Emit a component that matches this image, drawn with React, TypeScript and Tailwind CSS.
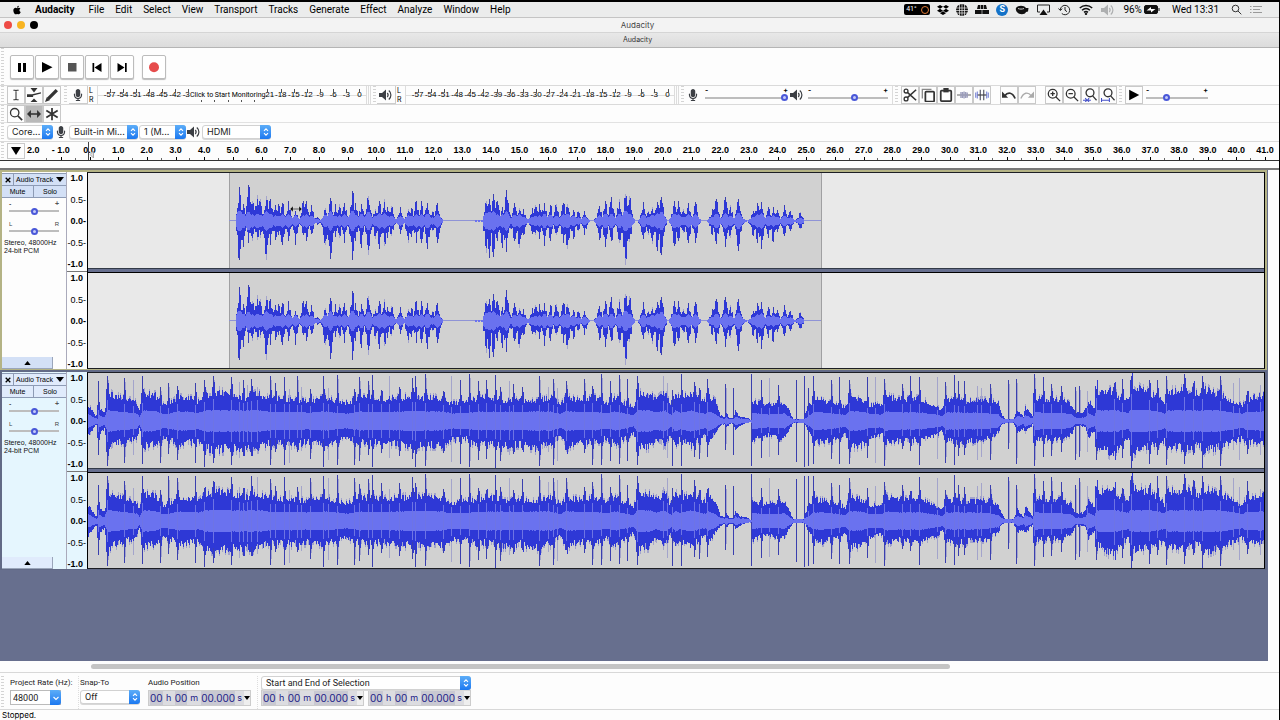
import React from "react";
import { FaApple, FaDropbox } from "react-icons/fa";
import { FaMicrophone } from "react-icons/fa6";

const SANS = "font-['Liberation_Sans',Arial,sans-serif]";

/* ---------- waveform data ---------- */

const WAVE_START = 88;
const WAVE_WIDTH = 1176;
const MID = 48;

// x, upper peak, lower peak
type Peak = [number, number, number];

const SPEECH: Peak[] = [
  [239, 34, 39], [243, 17, 26], [248, 36, 22], [252, 20, 20], [257, 26, 19], [260, 22, 17],
  [266, 25, 39], [270, 22, 24], [275, 16, 19], [278, 17, 14], [282, 18, 24], [288, 20, 20],
  [295, 10, 24], [303, 20, 14], [306, 20, 20], [311, 16, 13], [317, 4, 4], [325, 13, 24],
  [330, 23, 38], [335, 17, 16], [339, 17, 17], [344, 18, 22], [352, 30, 39], [355, 18, 20],
  [361, 17, 27], [368, 25, 34], [375, 12, 18], [379, 20, 28], [384, 22, 25], [387, 14, 17],
  [391, 15, 15], [400, 14, 13], [408, 12, 22], [411, 13, 16], [416, 20, 22], [421, 20, 22],
  [427, 18, 28], [432, 10, 10], [437, 18, 22], [486, 20, 32], [489, 22, 37], [493, 27, 36],
  [497, 20, 20], [502, 14, 27], [506, 31, 31], [510, 7, 8], [514, 18, 20], [519, 13, 27],
  [523, 12, 14], [532, 13, 13], [535, 16, 14], [539, 17, 18], [544, 18, 25], [550, 16, 20],
  [556, 17, 14], [563, 18, 22], [567, 17, 28], [573, 11, 18], [578, 10, 10], [584, 10, 14],
  [599, 15, 19], [605, 20, 26], [611, 24, 20], [619, 22, 22], [625, 27, 44], [629, 25, 21],
  [643, 19, 18], [648, 10, 14], [652, 14, 23], [657, 19, 30], [661, 24, 34], [674, 20, 25],
  [678, 20, 20], [683, 12, 12], [688, 18, 22], [695, 19, 22], [712, 12, 14], [716, 22, 23],
  [725, 24, 26], [730, 16, 17], [738, 22, 30], [741, 6, 8], [753, 10, 15], [757, 18, 22],
  [761, 19, 28], [768, 14, 17], [773, 14, 21], [777, 11, 11], [784, 16, 15], [790, 10, 10],
  [800, 9, 8],
];

const MUSIC: Peak[] = [
  [88, 16, 16], [95, 6, 5], [97, 5, 4], [98, 14, 15], [104, 9, 8], [107, 28, 28], [120, 24, 22],
  [136, 19, 18], [139, 12, 8], [143, 28, 26], [155, 26, 24], [162, 17, 18], [168, 17, 18],
  [178, 24, 24], [192, 23, 22], [198, 20, 20], [205, 26, 28], [215, 30, 30], [230, 28, 28],
  [245, 24, 28], [257, 28, 28], [272, 22, 22], [290, 22, 24], [310, 20, 22], [325, 24, 24],
  [345, 18, 18], [360, 24, 22], [380, 22, 22], [400, 24, 24], [415, 25, 26], [425, 24, 24],
  [440, 23, 26], [450, 18, 20], [465, 20, 18], [475, 22, 24], [490, 24, 22], [505, 20, 26],
  [520, 22, 24], [535, 20, 28], [550, 24, 24], [560, 17, 16], [566, 24, 26], [580, 22, 22],
  [595, 24, 22], [606, 18, 18], [615, 24, 24], [625, 18, 18], [633, 14, 12], [637, 28, 28],
  [650, 27, 26], [655, 22, 20], [665, 28, 24], [671, 15, 12], [675, 28, 25], [680, 22, 18],
  [690, 28, 26], [695, 25, 22], [705, 20, 14], [708, 27, 22], [715, 20, 12], [720, 6, 5],
  [724, 4, 3], [726, 8, 7], [729, 3, 3], [733, 3, 3], [735, 10, 9], [740, 4, 5], [743, 5, 3],
  [749, 2, 1], [751, 1, 1],
  [752, 20, 20], [765, 17, 14], [784, 19, 18], [788, 12, 10], [793, 2, 2], [803, 2, 2],
  [805, 8, 4], [809, 15, 10], [813, 22, 20], [822, 21, 22], [835, 17, 18], [845, 14, 14],
  [849, 24, 25], [860, 22, 26], [870, 16, 17], [882, 18, 14], [885, 25, 22], [900, 22, 20],
  [920, 23, 20], [937, 14, 15], [942, 12, 10], [946, 22, 20], [960, 20, 22], [985, 21, 19],
  [998, 18, 12], [1001, 8, 4], [1005, 2, 2], [1013, 2, 2], [1017, 12, 12], [1023, 4, 8],
  [1025, 14, 12], [1032, 5, 4], [1034, 24, 20], [1045, 22, 18], [1060, 22, 18], [1071, 17, 14],
  [1075, 8, 5], [1082, 8, 5], [1085, 12, 6], [1088, 20, 18], [1094, 14, 10], [1096, 30, 24],
  [1112, 31, 34], [1120, 24, 24], [1128, 22, 18], [1131, 36, 32], [1150, 28, 26], [1160, 23, 22],
  [1164, 17, 20], [1168, 30, 26], [1185, 32, 28], [1200, 27, 24], [1205, 32, 32], [1225, 25, 24],
  [1237, 18, 20], [1242, 16, 18], [1245, 22, 22], [1264, 26, 22],
];

const BEATS = [
  98, 107, 124, 133, 142, 160, 168, 177, 195, 204, 213, 231, 239, 243, 247, 251, 257, 270, 275,
  284, 289, 297, 301, 310, 323, 328, 337, 354, 359, 368, 372, 381, 389, 399, 412, 415, 425, 443,
  451, 460, 469, 478, 486, 495, 500, 509, 513, 522, 539, 548, 553, 557, 566, 584, 592, 601, 610,
  619, 627, 637, 663, 667, 672, 681, 694, 699, 707, 725, 733, 751, 761, 769, 778, 796, 804, 808,
  813, 831, 839, 849, 867, 875, 884, 902, 910, 919, 937, 945, 954, 958, 964, 977, 981, 990, 1008,
  1016, 1034, 1043, 1051, 1061, 1075, 1079, 1087, 1096, 1114, 1122, 1131, 1149, 1157, 1166, 1184,
  1193, 1202, 1220, 1233, 1239, 1247, 1260,
];
// softer hits, drawn faint
const FAINT = [
  133, 239, 247, 257, 289, 301, 328, 389, 451, 509, 548, 557, 663, 667, 769, 875, 937, 977, 981,
  1087, 1233, 1239, 1260,
];
const TALL = [
  107, 142, 231, 284, 323, 337, 372, 425, 469, 495, 539, 601, 619, 637, 681, 751, 804, 813, 919,
  954, 1034, 1131, 1166, 1184, 1202, 1220,
];

const noise = (n: number) => {
  const v = Math.sin(n * 127.1 + 31.7) * 43758.5453;
  return v - Math.floor(v);
};

const column = (x: number, up: number, down: number) =>
  `M${x} ${MID - Math.round(up)}h1V${MID + Math.round(down)}h-1z`;

const buildSpeech = () => {
  let edge = "";
  let peak = "";
  let rms = "";
  let pale = "";
  for (let x = 236; x < 804; x++) {
    let up = 0;
    let down = 0;
    let body = 0;
    SPEECH.forEach(([px, u, d]) => {
      const dist = Math.abs(px - x);
      if (dist < 6) {
        const fall = dist < 2 ? 1 - dist * 0.1 : Math.exp(-(dist - 1) / 1.8);
        up = Math.max(up, u * fall);
        down = Math.max(down, d * fall);
        body = Math.max(body, ((u + d) / 2) * Math.exp(-(dist * dist) / 14));
      }
    });
    if (x > 473 && x < 483) up = down = x % 3 ? 1 : 0.5;
    if (up < 0.6) continue;
    const isTop = SPEECH.some(([px]) => px === x);
    if (isTop) {
      if (noise(x * 3) > 0.35) edge += column(x, up, down);
      else pale += column(x, up, down);
      peak += column(x, up * 0.85, down * 0.85);
    } else {
      peak += column(x, up * (0.55 + noise(x) * 0.5), down * (0.55 + noise(x + 40) * 0.5));
    }
    const r = Math.min(body * 0.3, 9);
    rms += column(x, Math.min(r, up * 0.7) + 0.5, Math.min(r, down * 0.7) + 0.5);
  }
  return { edge, peak, rms, pale, slit: "" };
};

const buildMusic = (seed: number) => {
  let edge = "";
  let peak = "";
  let rms = "";
  let pale = "";
  let slit = "";
  let i = 0;
  for (let x = WAVE_START; x < WAVE_START + WAVE_WIDTH; x++) {
    while (i < MUSIC.length - 2 && MUSIC[i + 1][0] <= x) i++;
    const [x0, u0, d0] = MUSIC[i];
    const [x1, u1, d1] = MUSIC[i + 1];
    const t = (x - x0) / (x1 - x0);
    const up = u0 + (u1 - u0) * t;
    const down = d0 + (d1 - d0) * t;
    const j = noise(x + seed);
    const k = noise(x * 2 + seed + 7);
    peak += column(x, up * (0.84 + j * 0.28), down * (0.8 + k * 0.32));
    if (j > 0.75 && up > 12) pale += column(x, up * 1.18, down * 1.06);
    if (k > 0.8 && down > 12) pale += column(x, up, down * 1.2);
    const r = Math.min((up + down) * 0.18 + 0.6, 10.4);
    rms += column(x, r + noise(x + seed + 3) * 0.7, r + noise(x + seed + 4) * 0.7);
    if (BEATS.includes(x)) {
      const tall = TALL.includes(x);
      const hu = tall ? 44 + noise(x) * 3 : 30 + noise(x + seed * 2) * 15;
      const hd = tall ? 43 + noise(x + 1) * 4 : 28 + noise(x + 9) * 18;
      if (FAINT.includes(x)) pale += column(x, hu, hd);
      else {
        edge += column(x, hu, hd);
        if (noise(x + 5) > 0.55) pale += column(x + 1, hu - 4, hd - 6);
        if (up > 12) {
          peak += column(x - 1, up * 1.15, down * 1.1) + column(x + 1, up * 1.35, down * 1.25);
        }
      }
      if (up > 12) slit += column(x, up * 0.75, down * 0.75);
    }
  }
  return { edge, peak, rms, pale, slit };
};

const speechPaths = buildSpeech();
const musicLeft = buildMusic(0);
const musicRight = buildMusic(51);

type WavePaths = typeof speechPaths;

const Wave: React.FC<{ paths: WavePaths; clip?: [number, number] }> = ({ paths, clip }) => (
  <svg
    className="block h-[95px] w-full"
    viewBox="88 0 1176 95"
    preserveAspectRatio="none"
    shapeRendering="crispEdges"
  >
    {clip && (
      <>
        <rect x={clip[0]} y="0" width={clip[1] - clip[0]} height="95" fill="#d1d1d1" />
        <path d={`M${clip[0]} 0h1v95h-1zM${clip[1]} 0h1v95h-1z`} fill="#a0a0a2" />
        <rect x={clip[0]} y={MID - 1} width={clip[1] - clip[0]} height="1" fill="#8f93d6" />
      </>
    )}
    <path d={paths.pale} fill="#a3a4cb" />
    <path d={paths.edge} fill="#3a3fae" />
    <path d={paths.peak} fill="#2e38d6" />
    <path d={paths.rms} fill="#6a72ef" />
    <path d={paths.slit} fill="#6e74e4" />
  </svg>
);

/* ---------- small pieces ---------- */

const Grip = () => (
  <div className="mx-px w-[3px] self-stretch bg-[repeating-linear-gradient(to_bottom,#d4d4d4_0_1px,transparent_1px_3px)]" />
);

const Stepper: React.FC<{ down?: boolean }> = ({ down }) => (
  <span className="pointer-events-none absolute inset-y-0 right-0 flex w-[11px] items-center justify-center rounded-r-[3px] bg-gradient-to-b from-[#5cadf8] to-[#1a78f0]">
    <svg viewBox="0 0 8 10" className="h-[10px] w-2" fill="none" stroke="#fff" strokeWidth="1.1">
      {down ? <path d="M1.5 4 4 6.5 6.5 4" /> : <path d="M2 3.8 4 1.8l2 2M2 6.2l2 2 2-2" />}
    </svg>
  </span>
);

const Picker: React.FC<{ id?: string; label: string; value: string; className: string }> = ({
  id,
  label,
  value,
  className,
}) => (
  <div className={`relative h-[14px] ${className}`}>
    <select
      id={id}
      aria-label={label}
      className="block h-full w-full appearance-none overflow-hidden rounded-[3px] border border-[#d2d2d2] bg-white pl-1 text-[9px] leading-3 text-[#222] shadow-[0_1px_0_#d8d8d8]"
    >
      <option>{value}</option>
    </select>
    <Stepper />
  </div>
);

const Slider: React.FC<{ label: string; value: number }> = ({ label, value }) => (
  <input
    type="range"
    aria-label={label}
    defaultValue={value}
    className="block h-2 w-full appearance-none bg-[linear-gradient(#bdbdbd,#bdbdbd)] bg-[length:100%_2px] bg-center bg-no-repeat [&::-webkit-slider-thumb]:size-[7px] [&::-webkit-slider-thumb]:appearance-none [&::-webkit-slider-thumb]:rounded-full [&::-webkit-slider-thumb]:border-2 [&::-webkit-slider-thumb]:border-[#4a58d8] [&::-webkit-slider-thumb]:bg-[#c5cbf8]"
  />
);

const MixerSlider: React.FC<{ label: string; value: number; className: string }> = ({
  label,
  value,
  className,
}) => (
  <div className={className}>
    <div className="flex h-[5px] justify-between text-[7px] leading-[4px] font-bold">
      <span>-</span>
      <span>+</span>
    </div>
    <Slider label={label} value={value} />
  </div>
);

const Speaker: React.FC<{ className?: string }> = ({ className = "" }) => (
  <svg viewBox="0 0 14 12" className={`h-3 w-[14px] ${className}`}>
    <path d="M0 4h3l4-3.6v11.2L3 8H0z" fill="#3c3f44" />
    <path
      d="M8.3 4c1 1.2 1 2.8 0 4M9.8 1.5c2.800 2.500 2.800 6.500 0 9"
      fill="none"
      stroke="#3c3f44"
      strokeWidth="1.2"
    />
  </svg>
);

const ToolButton: React.FC<{
  label: string;
  active?: boolean;
  children: React.ReactNode;
}> = ({ label, active, children }) => (
  <button
    aria-label={label}
    className={`flex h-[18px] w-[18px] items-center justify-center border border-[#c9c9c9] ${
      active ? "bg-[#b9b9b9]" : "bg-[#fdfdfd]"
    }`}
  >
    <svg viewBox="0 0 16 16" className="size-[14px]" fill="none" stroke="#333" strokeWidth="1.5">
      {children}
    </svg>
  </button>
);

const DB_MARKS = [
  "-57", "-54", "-51", "-48", "-45", "-42", "-39", "-36", "-33", "-30",
  "-27", "-24", "-21", "-18", "-15", "-12", "-9", "-6", "-3", "0",
];
// the notice sits over the middle of the scale
const DB_MARKS_NOTICE = [
  "-57", "-54", "-51", "-48", "-45", "-42", "-3", "", "", "",
  "", "", "21", "-18", "-15", "-12", "-9", "-6", "-3", "0",
];

const Meter: React.FC<{ label: string; notice?: string }> = ({ label, notice }) => (
  <>
    <div className="flex w-[9px] flex-col pl-px text-[7px] leading-[9px]">
      <span>L</span>
      <span>R</span>
    </div>
    <div
      aria-label={label}
      className={`relative flex w-[270px] items-center border-x border-[#ddd] bg-[linear-gradient(#ddd,#ddd)] bg-[length:100%_1px] bg-center bg-no-repeat pl-[5px] ${SANS}`}
    >
      {(notice ? DB_MARKS_NOTICE : DB_MARKS).map((mark, i) => (
        <div key={i} className="relative flex flex-1 justify-center text-[8px] leading-[18px]">
          <span className="absolute top-[3px] left-1/2 h-1 w-px bg-[#555]" />
          <span className={mark === "21" ? "pl-[5px]" : mark === "-3" && i === 6 ? "pr-1" : ""}>
            {mark}
          </span>
        </div>
      ))}
      {notice && (
        <button className="absolute top-[5px] left-[92px] bg-[#fdfdfd] font-['Roboto',sans-serif] text-[7px] leading-[9px] whitespace-nowrap">
          {notice}
        </button>
      )}
    </div>
  </>
);

const TransportButton: React.FC<{ label: string; children: React.ReactNode }> = ({
  label,
  children,
}) => (
  <button
    aria-label={label}
    className="flex size-[24px] items-center justify-center rounded-[2px] border border-[#bcbcbc] bg-white shadow-[0_1px_1px_#bbb]"
  >
    <svg viewBox="0 0 12 12" className="size-3">
      {children}
    </svg>
  </button>
);

/* ---------- mac menu bar ---------- */

const MENUS = [
  "File", "Edit", "Select", "View", "Transport", "Tracks",
  "Generate", "Effect", "Analyze", "Window", "Help",
];

const MenuBar = () => (
  <header className="flex h-4 items-center border-b border-[#c4c4c4] bg-[#ebecec] pl-3 font-['Roboto','Inter',sans-serif] text-[10px] leading-none">
    <FaApple className="mr-[13px] size-[10px]" />
    <button className="mr-[14px] font-bold">Audacity</button>
    <nav className="flex items-center gap-[11px]">
      {MENUS.map((m) => (
        <button key={m}>{m}</button>
      ))}
    </nav>
    <div className="ml-auto flex items-center gap-2 pr-4">
      <div className="flex items-center gap-[7px]">
        <span className="flex h-[11px] w-[26px] items-center justify-center gap-1 rounded-[2px] bg-black text-[7px] text-white">
          41°
          <span className="size-2 rounded-full border border-[#e07a35]" />
        </span>
        <FaDropbox className="size-3" />
        <svg viewBox="0 0 12 12" className="size-3">
          <circle cx="6" cy="6" r="6" fill="#111" />
          <path
            d="M0 4h12M0 6.500h12M0 9h12M3.500 0v12M6 0v12M8.500 0v12"
            stroke="#eee"
            strokeWidth=".7"
          />
        </svg>
        <svg viewBox="0 0 14 11" className="h-[11px] w-[14px]">
          <path d="M3 1h8l1 4H2zM0 6h14v4H0z" fill="#111" />
          <path d="M5.500 1v4M8.500 1v4M7 6v4" stroke="#ebecec" strokeWidth=".6" />
        </svg>
        <span className="flex size-3 items-center justify-center rounded-full bg-[#1472c8] text-[9px] font-bold text-white">
          S
        </span>
        <svg viewBox="0 0 14 12" className="h-3 w-[14px]">
          <path d="M1 4c2-3 8-3 10 0h2.500l-.5 3.500-2 .5c-1 3-7 3-9 0-1-1-1.500-3-1-4z" fill="#111" />
          <path d="M3 4.500c2 .8 4 .8 6 0" fill="none" stroke="#ccc" />
        </svg>
      </div>
      <svg viewBox="0 0 13 11" className="h-[11px] w-[13px]">
        <path d="M3 8H.5V1h12v7H10" fill="none" stroke="#222" />
        <path d="M2.500 11 6.500 5.500 10.500 11z" fill="#111" />
      </svg>
      <svg viewBox="0 0 13 12" className="h-3 w-[13px]" fill="none" stroke="#222">
        <path d="M2.300 6a4.700 4.700 0 1 1 1.500 3.500M.5 4.500l1.800 2 2-1.800M7 3v3.200l2 1.500" />
      </svg>
      <svg viewBox="0 0 14 11" className="h-[11px] w-[14px]" fill="none" stroke="#111" strokeWidth="1.500">
        <path d="M.8 4c3.600-3.500 8.800-3.500 12.400 0M3 6.300c2.400-2.200 5.600-2.200 8 0M5 8.400c1.200-1 2.800-1 4 0" />
        <circle cx="7" cy="9.800" r=".5" />
      </svg>
      <Speaker className="opacity-35" />
      <span className="flex items-center gap-[2px]">
        96%
        <svg viewBox="0 0 16 9" className="h-[9px] w-4">
          <rect x=".5" y=".5" width="13" height="8" rx="1.500" fill="#111" stroke="#111" />
          <path d="M14.500 3v3h1V3z" fill="#111" />
          <path d="M2.500 5.500 7 2v2h4.500L7 7.500V5.500z" fill="#fff" />
        </svg>
      </span>
      <span className="ml-1">Wed 13:31</span>
      <svg viewBox="0 0 11 11" className="ml-1 size-[11px]" fill="none" stroke="#333">
        <circle cx="4.500" cy="4.500" r="3.300" />
        <path d="m7 7 3.300 3.300" />
      </svg>
      <svg viewBox="0 0 13 9" className="h-[9px] w-[13px]" stroke="#999">
        <path d="M0 1.500h1.500M3 1.500h9M0 4.500h1.500M3 4.500h7M0 7.500h1.500M3 7.500h9" />
      </svg>
    </div>
  </header>
);

/* ---------- tool bars ---------- */

const TransportBar = () => (
  <div className="flex h-[38px] items-center border-b border-[#dadada]">
    <Grip />
    <div className="ml-[5px] flex gap-px">
      <TransportButton label="Pause">
        <path d="M2 2h3v9H2zM7 2h3v9H7z" />
      </TransportButton>
      <TransportButton label="Play">
        <path d="M1 1l10.500 5.300L1 11.500z" />
      </TransportButton>
      <TransportButton label="Stop">
        <path d="M2 2h8.500v8.500H2z" fill="#555" />
      </TransportButton>
      <TransportButton label="Skip to start">
        <path d="M1.500 2h1.700v9H1.500zM10.500 2v9L3.500 6.500z" />
      </TransportButton>
      <TransportButton label="Skip to end">
        <path d="M9 2h1.700v9H9zM1.500 2v9l7-4.500z" />
      </TransportButton>
    </div>
    <div className="ml-2">
      <TransportButton label="Record">
        <circle cx="6" cy="6.300" r="5" fill="#e64c4c" />
      </TransportButton>
    </div>
  </div>
);

const MeterAndEditBar = () => (
  <div className="flex h-[19px] items-center border-b border-[#dadada]">
    <Grip />
    <div className="ml-[2px] flex">
      <ToolButton label="Selection tool">
        <path d="M5 2.500h2l1 .7 1-.7h2M5 13.500h2l1-.7 1 .7h2M8 3v10" strokeWidth="1.200" />
      </ToolButton>
      <ToolButton label="Envelope tool">
        <path d="M0 8h6l10-2.500M0 9.500h7" strokeWidth="1.600" />
        <path d="M4 0h8L8 5zM4 16h8l-4-4z" fill="#333" stroke="none" />
      </ToolButton>
      <ToolButton label="Draw tool">
        <path d="M3.500 12.500 13.500 2.500" strokeWidth="3.800" />
        <path d="m0 16 2-5.500 3.500 3.500z" fill="#333" stroke="none" />
      </ToolButton>
    </div>
    <div className="ml-[2px] flex self-stretch">
      <Grip />
      <button
        aria-label="Record meter"
        className="ml-px flex w-[19px] items-center justify-center border-r border-b border-[#ccc]"
      >
        <FaMicrophone className="size-3 text-[#3c3f44]" />
      </button>
      <Meter label="Recording level" notice="Click to Start Monitoring" />
      <div className="ml-px w-[3px] border-x border-[#ddd]" />
    </div>
    <div className="ml-px flex self-stretch">
      <Grip />
      <button
        aria-label="Playback meter"
        className="flex w-[19px] items-center justify-center border-r border-b border-[#ccc]"
      >
        <Speaker />
      </button>
      <Meter label="Playback level" />
      <div className="ml-px w-[3px] border-x border-[#ddd]" />
    </div>
    <div className="ml-px flex items-center self-stretch">
      <Grip />
      <FaMicrophone className="mr-[6px] ml-[2px] size-3 text-[#3c3f44]" />
      <MixerSlider label="Recording volume" value={100} className="w-[83px]" />
      <Speaker className="mr-1 ml-[2px]" />
      <MixerSlider label="Playback volume" value={59} className="w-[80px]" />
      <div className="ml-1 w-px self-stretch bg-[#ddd]" />
    </div>
    <div className="ml-px flex items-center self-stretch">
      <Grip />
      <div className="ml-[2px] flex">
        <ToolButton label="Cut">
          <circle cx="3.500" cy="3.500" r="2.200" />
          <circle cx="3.500" cy="12.500" r="2.200" />
          <path d="M5 5 15 14M5 11 15 2" strokeWidth="1.800" />
        </ToolButton>
        <ToolButton label="Copy">
          <path d="M1.500 12V1.500H12" stroke="#888" />
          <rect x="5" y="4" width="10" height="11.500" rx="1" strokeWidth="2" />
        </ToolButton>
        <ToolButton label="Paste">
          <rect x="2" y="3" width="12" height="12" rx="1" strokeWidth="2" />
          <rect x="5" y="0" width="6" height="5" fill="#333" stroke="none" />
        </ToolButton>
        <ToolButton label="Trim audio">
          <path d="M0 8h16" stroke="#888" />
          <path d="M4.500 4.500v7M6.300 4.500v7M8.100 4v8M9.900 4.500v7M11.700 5v6" stroke="#9a9cba" />
        </ToolButton>
        <ToolButton label="Silence audio">
          <path d="M.7 5v6M2.700 4v8M13.300 4v8M15.300 5v6" stroke="#8c96dc" />
          <path d="M3 8h10" stroke="#555" />
          <path d="M6 2v12M10 2v12" stroke="#445" strokeWidth="1.200" />
        </ToolButton>
      </div>
      <div className="ml-[9px] flex">
        <ToolButton label="Undo">
          <path d="M3 9c4-5 9-4 12 3" strokeWidth="2" />
          <path d="M0 4v7h7z" fill="#333" stroke="none" />
        </ToolButton>
        <ToolButton label="Redo">
          <path d="M13 9C9 4 4 5 1 12" stroke="#aaa" strokeWidth="1.500" />
          <path d="M16 4v7H9z" fill="#aaa" stroke="none" />
        </ToolButton>
      </div>
      <div className="ml-[9px] flex">
        <ToolButton label="Zoom in">
          <circle cx="6.500" cy="6.500" r="5" />
          <path d="m10 10 5 5M4 6.500h5M6.500 4v5" />
        </ToolButton>
        <ToolButton label="Zoom out">
          <circle cx="6.500" cy="6.500" r="5" />
          <path d="m10 10 5 5M4 6.500h5" />
        </ToolButton>
        <ToolButton label="Fit selection">
          <circle cx="8" cy="5.500" r="4.500" />
          <path d="m11 9 4.500 5" />
          <path d="M0 14h9M2.500 11.500l2 2.500-2 2M7 11.500 5 14l2 2" stroke="#4450c8" strokeWidth="1.200" />
        </ToolButton>
        <ToolButton label="Fit project">
          <circle cx="8" cy="5.500" r="4.500" />
          <path d="m11 9 4.500 5" />
          <path d="M.6 14h9M.6 11.500V16M9.600 11.500V16" stroke="#4450c8" strokeWidth="1.200" />
        </ToolButton>
      </div>
      <div className="ml-px flex items-center self-stretch">
        <Grip />
        <div className="ml-[2px]">
          <ToolButton label="Play at speed">
            <path d="M2.500 2 14 8 2.500 14z" fill="#000" stroke="none" />
          </ToolButton>
        </div>
        <MixerSlider label="Playback speed" value={31} className="ml-[3px] w-[62px]" />
      </div>
    </div>
  </div>
);

const ToolsRow = () => (
  <div className="flex h-[18px] items-center border-b border-[#e2e2e2]">
    <Grip />
    <div className="ml-[2px] flex">
      <ToolButton label="Zoom tool">
        <circle cx="6.500" cy="6.500" r="4.800" />
        <path d="m10 10 5 5" strokeWidth="2" />
      </ToolButton>
      <ToolButton label="Time shift tool" active>
        <path d="M3 8h10" strokeWidth="1.800" />
        <path d="M0 8l4.500-4.500v9zM16 8l-4.500-4.500v9z" fill="#333" stroke="none" />
      </ToolButton>
      <ToolButton label="Multi tool">
        <path d="M8 1v14M1.500 4l13 8M14.500 4l-13 8" strokeWidth="2" />
      </ToolButton>
    </div>
  </div>
);

const DeviceBar = () => (
  <div className="flex h-[19px] items-center border-b border-[#dadada]">
    <Grip />
    <Picker label="Audio host" value="Core..." className="ml-[2px] w-[46px]" />
    <FaMicrophone className="mx-[2px] size-3 text-[#3c3f44]" />
    <Picker label="Recording device" value="Built-in Mi..." className="w-[69px]" />
    <Picker label="Recording channels" value="1 (M..." className="ml-px w-[47px]" />
    <Speaker className="mx-px" />
    <Picker label="Playback device" value="HDMI" className="w-[69px]" />
  </div>
);

const TimeRuler = () => (
  <div className="flex h-[19px] items-stretch overflow-hidden border-b border-[#333]">
    <Grip />
    <button
      aria-label="Pin play head"
      className="mt-px ml-[2px] flex h-4 w-[18px] shrink-0 items-center justify-center border border-[#c9c9c9]"
    >
      <svg viewBox="0 0 10 8" className="h-2 w-[10px]">
        <path d="M0 0h10L5 8z" />
      </svg>
    </button>
    <div className={`flex min-w-0 flex-1 text-[9px] leading-[17px] font-bold ${SANS}`}>
      <span className="w-[21px] pl-[2px]">2.0</span>
      {Array.from({ length: 43 }, (_, i) => (
        <div
          key={i}
          className="relative flex min-w-0 flex-1 justify-center border-l border-transparent whitespace-nowrap"
        >
          {i === 0 ? "- 1.0" : `${i - 1}.0`}
          <span className="absolute bottom-0 left-1/2 h-[3px] w-px bg-black" />
          <span className="absolute bottom-0 -left-px h-[2px] w-px bg-[#666]" />
          {i === 1 && (
            <svg viewBox="0 0 7 19" className="absolute bottom-0 left-[12px] h-[19px] w-[7px]">
              <path d="M0 0h1v19H0z" fill="#444" />
              <path d="M5.500 10v7L2 13.500z" fill="#ddd" stroke="#999" strokeWidth=".8" />
            </svg>
          )}
        </div>
      ))}
    </div>
  </div>
);

/* ---------- tracks ---------- */

const Scale = () => (
  <div
    className={`flex h-[95px] flex-col justify-between pr-[4px] text-right text-[9px] leading-[9px] ${SANS}`}
  >
    <span className="font-bold">1.0</span>
    <span className="-mr-[3px]">0.5-</span>
    <span className="-mr-[3px] font-bold">0.0-</span>
    <span className="-mr-[3px]">-0.5-</span>
    <span className="font-bold">-1.0</span>
  </div>
);

const Track: React.FC<{
  selected?: boolean;
  clip?: [number, number];
  left: WavePaths;
  right: WavePaths;
}> = ({ selected, clip, left, right }) => {
  const wash = selected ? "bg-[#e5f6fe]" : "bg-[#fdfdfd]";
  const head = selected ? "bg-[#e0ebfc]" : "bg-[#d3e0f6]";
  return (
    <section
      className={`flex h-[200px] border-x-2 border-t-2 border-b ${
        selected ? "border-[#626a86]" : "border-[#b4b385]"
      }`}
    >
      <div className={`flex w-16 shrink-0 flex-col pt-px ${wash} ${SANS} text-[7px] leading-[8px]`}>
        <div className={`flex h-[13px] items-center border-t border-b border-[#8d9bb5] ${head}`}>
          <button aria-label="Close track" className="h-full w-3 border-r border-[#8d9bb5]">
            <svg viewBox="0 0 6 6" className="mx-auto size-[6px]" stroke="#000" strokeWidth="1.300">
              <path d="m.7.7 4.600 4.600M5.300.7.7 5.300" />
            </svg>
          </button>
          <button className="flex flex-1 items-center justify-between pr-[2px] pl-[2px]">
            Audio Track
            <svg viewBox="0 0 8 5" className="h-[5px] w-2">
              <path d="M0 0h8L4 5z" />
            </svg>
          </button>
        </div>
        <div className={`grid h-3 grid-cols-2 border-b border-[#8d9bb5] ${head}`}>
          <button className="border-r border-[#8d9bb5]">Mute</button>
          <button>Solo</button>
        </div>
        <div className="px-[7px] pt-[3px]">
          <div className="flex h-[6px] justify-between leading-[6px] font-bold text-[#555]">
            <span>-</span>
            <span>+</span>
          </div>
          <Slider label="Gain" value={50} />
          <div className="mt-[6px] flex h-[6px] justify-between text-[6px] leading-[6px] text-[#444]">
            <span>L</span>
            <span>R</span>
          </div>
          <Slider label="Pan" value={50} />
        </div>
        <p className="mt-1 pl-[2px] whitespace-nowrap text-[#111]">
          Stereo, 48000Hz
          <br />
          24-bit PCM
        </p>
        <button
          aria-label="Collapse track"
          className={`mt-auto flex h-3 w-[51px] items-center justify-center border-r border-b border-[#9aa5ba] ${head}`}
        >
          <svg viewBox="0 0 8 5" className="h-1 w-[7px]">
            <path d="M0 5h8L4 0z" />
          </svg>
        </button>
      </div>
      <div
        className={`flex w-[21px] shrink-0 flex-col justify-between border-l border-[#aab] pt-[2px] ${wash}`}
      >
        <Scale />
        <div className="h-px bg-[#777]" />
        <Scale />
      </div>
      <div className="relative flex min-w-0 flex-1 flex-col border border-y-[#1c1e24] border-x-black">
        <div className={selected ? "bg-[#d1d1d1]" : "bg-[#e9e9e9]"}>
          <Wave paths={left} clip={clip} />
        </div>
        <div className="flex-1 border-y border-t-[#333a48] border-b-black bg-[#676f8e]" />
        <div className={selected ? "bg-[#d1d1d1]" : "bg-[#e9e9e9]"}>
          <Wave paths={right} clip={clip} />
        </div>
        {!selected && (
          <svg viewBox="0 0 12 6" className="absolute top-[33px] left-[202px] h-[6px] w-3">
            <path d="M0 3l3-3v2.500h6V0l3 3-3 3V3.500H3V6z" fill="#111" stroke="#fff" strokeWidth=".3" />
          </svg>
        )}
      </div>
    </section>
  );
};

/* ---------- selection bar ---------- */

const TimeField: React.FC<{ label: string }> = ({ label }) => (
  <div
    aria-label={label}
    className="flex h-4 w-[103px] items-center border border-[#ccc] bg-[#dcdce0] pl-px font-['Inter',sans-serif] text-[10px] text-[#1c2288]"
  >
    <span className="bg-[#c9c9d2]">00</span>
    <span className="w-3 text-center text-[9px]">h</span>
    <span className="bg-[#c9c9d2]">00</span>
    <span className="w-[14px] text-center text-[9px]">m</span>
    <span className="bg-[#c9c9d2]">00.000</span>
    <span className="flex-1 text-center text-[9px]">s</span>
    <button aria-label={`${label} format`} className="flex h-full w-[6px] items-center bg-[#eee]">
      <svg viewBox="0 0 6 4" className="h-1 w-[6px]">
        <path d="M0 0h6L3 4z" />
      </svg>
    </button>
  </div>
);

const SelectionBar = () => (
  <footer className="flex h-[38px] items-stretch border-y border-[#d8d8d8] pt-[3px] font-['Roboto','Inter',sans-serif] text-[8px] leading-[14px] text-[#222]">
    <Grip />
    <div className="ml-[5px] w-[65px]">
      <label htmlFor="rate" className="block whitespace-nowrap">
        Project Rate (Hz):
      </label>
      <div className="relative h-[15px] w-[51px]">
        <input
          id="rate"
          defaultValue="48000"
          className="block h-full w-full border border-[#bbb] bg-white pl-[2px] text-[9px]"
        />
        <Stepper down />
      </div>
    </div>
    <div className="ml-[3px] w-[65px] border-l border-dotted border-[#ddd] pl-px">
      <label htmlFor="snap" className="block">
        Snap-To
      </label>
      <Picker id="snap" label="Snap-To" value="Off" className="w-[60px]" />
    </div>
    <div className="ml-[5px] w-[108px]">
      <p>Audio Position</p>
      <TimeField label="Audio Position" />
    </div>
    <div className="ml-px w-[215px] border-l border-dotted border-[#ddd] pl-[3px]">
      <Picker label="Selection mode" value="Start and End of Selection" className="w-[210px]" />
      <div className="flex gap-1">
        <TimeField label="Selection start" />
        <TimeField label="Selection end" />
      </div>
    </div>
  </footer>
);

export default function App() {
  return (
    <div className="flex min-h-screen flex-col border-t-2 border-r border-black bg-[#fdfdfd] font-['Inter','Roboto',sans-serif] text-black">
      <MenuBar />
      <div className="relative flex h-[15px] items-center justify-center border-b border-[#d5d5d5] bg-[#f3f3f3] pr-1 text-[8px] text-[#444]">
        <div className="absolute left-1 flex gap-[5px]">
          <button aria-label="Close" className="size-2 rounded-full bg-[#ee4b45]" />
          <button aria-label="Minimize" className="size-2 rounded-full bg-[#f8b421]" />
          <button aria-label="Zoom" className="size-2 rounded-full bg-black" />
        </div>
        Audacity
      </div>
      <div className="flex h-[15px] items-center justify-center border-b border-[#b5b5b5] bg-gradient-to-b from-[#e8e8e8] to-[#dcdcdc] pr-1 text-[7px] text-[#333]">
        Audacity
      </div>
      <TransportBar />
      <MeterAndEditBar />
      <ToolsRow />
      <DeviceBar />
      <TimeRuler />
      <div className="h-[9px] shrink-0 border-b-2 border-[#777]" />
      <main className="flex flex-1 flex-col pr-[11px]">
        <div className="flex-1 bg-[#676f8e] pr-px">
          <Track clip={[229, 821]} left={speechPaths} right={speechPaths} />
          <Track selected left={musicLeft} right={musicRight} />
        </div>
        <div className="flex h-[11px] items-center bg-[#fdfdfd] pl-[91px]">
          <div className="h-[5px] w-[73%] rounded-full bg-[#c4c4c4]" />
        </div>
      </main>
      <SelectionBar />
      <div className="h-[10px] pl-[2px] text-[8px] leading-[10px]">Stopped.</div>
    </div>
  );
}
